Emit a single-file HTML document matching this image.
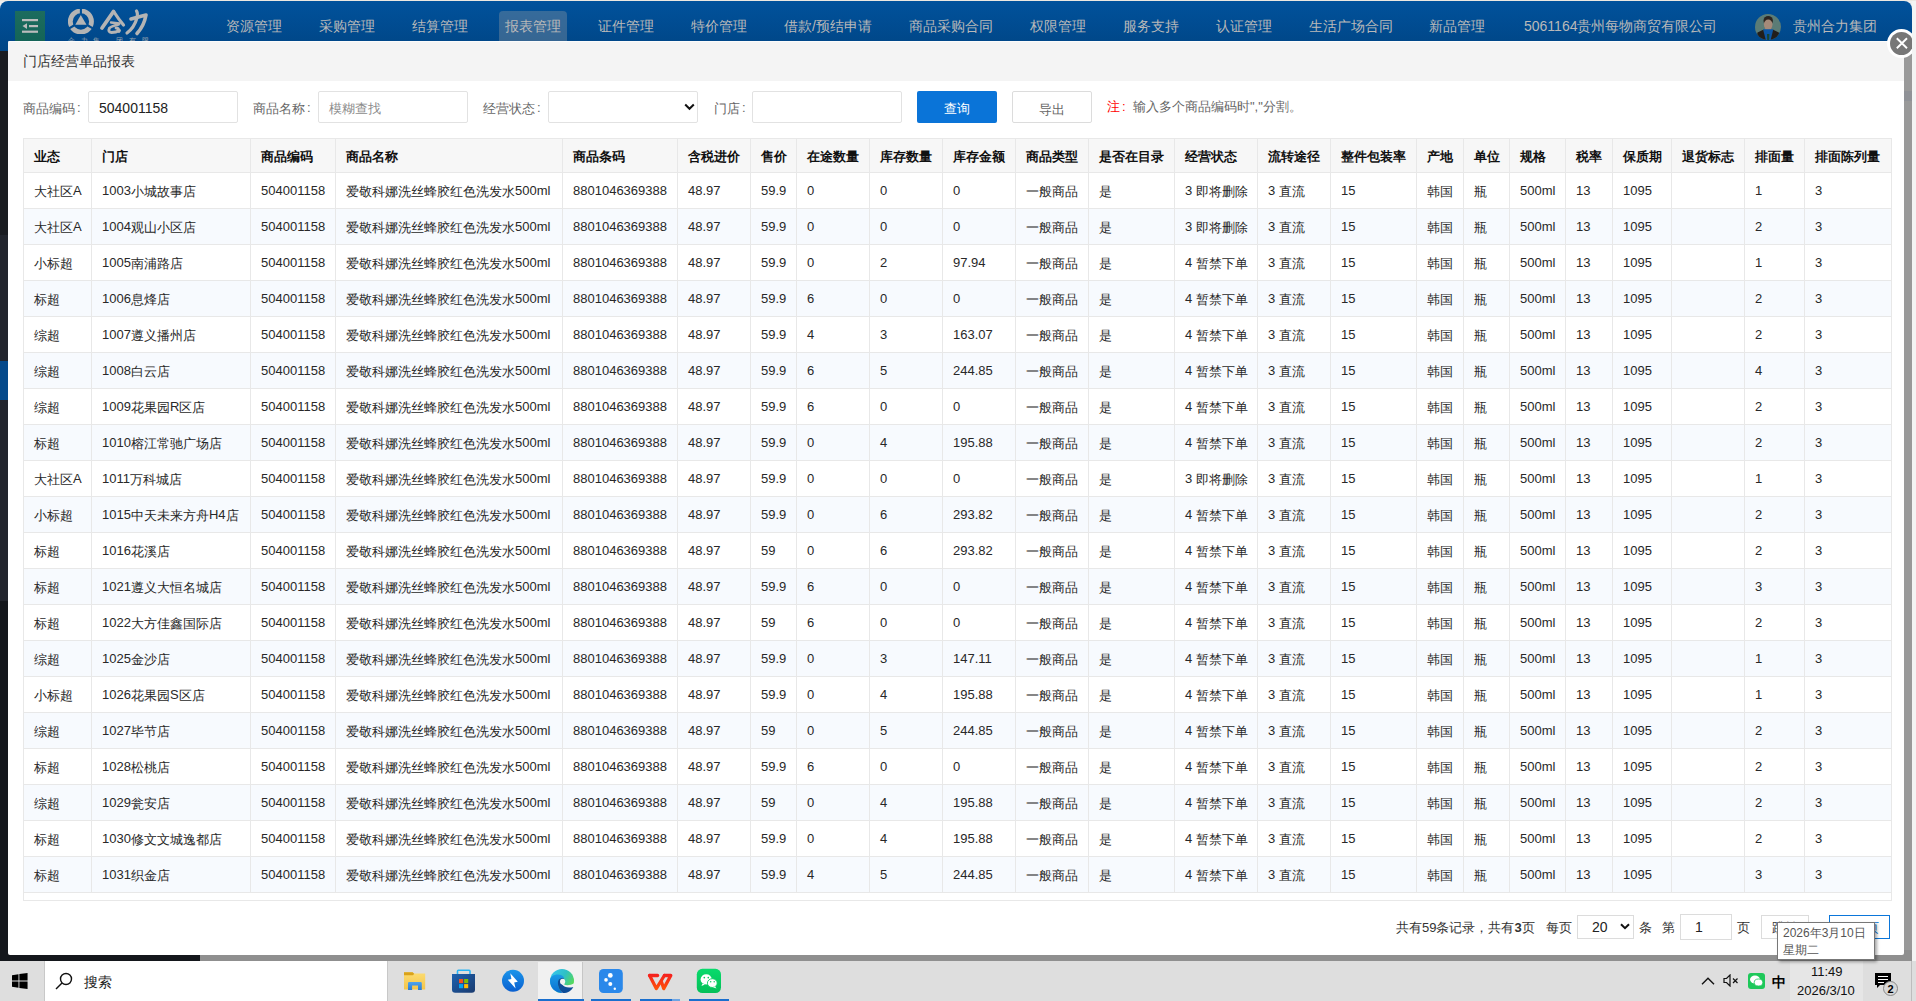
<!DOCTYPE html><html><head><meta charset="utf-8"><title>门店经营单品报表</title><style>
*{box-sizing:border-box}
html,body{margin:0;padding:0}
body{width:1916px;height:1001px;overflow:hidden;position:relative;background:#f0f0f0;font-family:"Liberation Sans",sans-serif;color:#333}
i{font-style:normal;position:relative}
.a{position:absolute}
.t{position:absolute;white-space:nowrap}
#win{position:absolute;left:0;top:0;width:1912px;height:961px;overflow:hidden}
#hdr{left:0;top:1px;width:1912px;height:50px;background:linear-gradient(#01529c,#004585);border-radius:8px 8px 0 0}
.nav{position:absolute;top:17px;font-size:14px;line-height:18px;color:#b9b9b9;white-space:nowrap}
#content{left:200px;top:51px;width:1712px;height:910px;background:#999}
#modal{left:8px;top:41px;width:1896px;height:914px;background:#fff;border-radius:2px;overflow:hidden}
#mtitle{left:0;top:0;width:1896px;height:40px;background:#f4f4f4;border-top:1px solid #fbfbfb}
.lbl{position:absolute;font-size:13px;line-height:16px;color:#666;white-space:nowrap}
.inp{position:absolute;height:32px;width:150px;border:1px solid #e2e2e2;border-radius:2px;background:#fff}
.cell{position:absolute;font-size:13px;line-height:16px;color:#282828;white-space:nowrap}
.hcell{position:absolute;font-size:13px;line-height:16px;color:#111;font-weight:bold;white-space:nowrap}
.vl{position:absolute;width:1px;background:#e8e8e8}
.hl{position:absolute;height:1px;background:#e8e8e8}
</style></head><body>
<div class="a" style="left:0;top:0;width:1916px;height:1px;background:#ece8e1"></div>
<div id="win">
<div class="a" id="content"></div>
<div class="a" style="left:200px;top:950px;width:1712px;height:11px;background:#8f8f8f"></div>
<div class="a" style="left:0;top:51px;width:200px;height:910px;background:#14171c"></div>
<div class="a" style="left:0;top:51px;width:200px;height:184px;background:#1a1c21"></div>
<div class="a" style="left:0;top:235px;width:200px;height:366px;background:#22252d"></div>
<div class="a" style="left:0;top:361px;width:200px;height:39px;background:#05498a"></div>
<div class="a" id="hdr"></div>
<div class="a" style="left:15px;top:11px;width:30px;height:31px;background:linear-gradient(#1c6c5e,#146457)"></div>
<svg class="a" style="left:15px;top:11px" width="30" height="30" viewBox="0 0 30 30"><g fill="#bcbcbc"><rect x="7" y="8" width="16" height="2.2"/><rect x="14" y="14" width="9" height="2.2"/><rect x="7" y="19.6" width="16" height="2.2"/><path d="M7.5 15.1 L12 12.2 L12 18 Z"/></g></svg>
<svg class="a" style="left:64px;top:4px" width="88" height="40" viewBox="0 0 88 40">
<defs><mask id="rm"><rect width="40" height="40" fill="#fff"/>
<g stroke="#000" stroke-width="2.1"><path d="M16.9 17.5 L16.9 0"/><path d="M16.9 17.5 L40 30.8"/><path d="M16.9 17.5 L-6.2 30.8"/></g></mask></defs>
<circle cx="16.9" cy="17.5" r="10.6" fill="none" stroke="#b4b4b4" stroke-width="4.8" mask="url(#rm)"/>
<path d="M16.8 11 L22.5 20.7 L11.25 20.7 Z" fill="#b4b4b4"/>
<g fill="none" stroke="#b4b4b4" stroke-linecap="round" stroke-linejoin="round">
<path d="M49.5 7.5 Q44 15.5 38 24" stroke-width="3.8"/>
<path d="M50 8 Q54.5 15 59.5 21" stroke-width="3.2"/>
<path d="M47 18.5 L55.5 19.5" stroke-width="2.4"/>
<path d="M54.5 20.5 Q48 22 45.5 24 Q43.5 28 47.5 28.5 Q52 28.5 55.5 26.5" stroke-width="2.8"/>
<path d="M52 24 Q55 24 55 27.5" stroke-width="2.8"/>
<path d="M67 15 Q74 13 82 11 Q80 22 73 29.5" stroke-width="3.6"/>
<path d="M72.5 7 Q74 9 73 14 Q70 24 63 29" stroke-width="3.2"/>
</g>
</svg>
<div class="t" style="left:68px;top:37px;font-size:7px;line-height:8px;color:#9aa4b0">合</div>
<div class="t" style="left:81px;top:37px;font-size:7px;line-height:8px;color:#9aa4b0">力</div>
<div class="t" style="left:93px;top:37px;font-size:7px;line-height:8px;color:#9aa4b0">集</div>
<div class="t" style="left:116px;top:37px;font-size:7px;line-height:8px;color:#9aa4b0">团</div>
<div class="t" style="left:129px;top:37px;font-size:7px;line-height:8px;color:#9aa4b0">有</div>
<div class="t" style="left:142px;top:37px;font-size:7px;line-height:8px;color:#9aa4b0">限</div>
<div class="a" style="left:499px;top:11px;width:68px;height:30px;background:rgba(165,165,165,0.33);border-radius:4px 4px 0 0"></div>
<div class="nav" style="left:226px">资源管理</div>
<div class="nav" style="left:319px">采购管理</div>
<div class="nav" style="left:412px">结算管理</div>
<div class="nav" style="left:505px">报表管理</div>
<div class="nav" style="left:598px">证件管理</div>
<div class="nav" style="left:691px">特价管理</div>
<div class="nav" style="left:784px">借款/预结申请</div>
<div class="nav" style="left:909px">商品采购合同</div>
<div class="nav" style="left:1030px">权限管理</div>
<div class="nav" style="left:1123px">服务支持</div>
<div class="nav" style="left:1216px">认证管理</div>
<div class="nav" style="left:1309px">生活广场合同</div>
<div class="nav" style="left:1429px">新品管理</div>
<div class="nav" style="left:1524px">5061164贵州每物商贸有限公司</div>
<div class="nav" style="left:1793px">贵州合力集团</div>
<svg class="a" style="left:1755px;top:14px" width="26" height="27" viewBox="0 0 26 27">
<defs><clipPath id="cc"><circle cx="13" cy="13" r="13"/></clipPath></defs>
<g clip-path="url(#cc)"><rect width="26" height="27" fill="#5b7c76"/>
<ellipse cx="13.2" cy="6.8" rx="4.7" ry="4.9" fill="#2b241f"/>
<rect x="10.1" y="12" width="6.1" height="4.5" fill="#9a7f6f"/>
<ellipse cx="13.2" cy="10.6" rx="4.3" ry="5" fill="#a58a79"/>
<path d="M8 15.2 L18.4 15.2 L16.8 27 L9.8 27 Z" fill="#0b56a6"/>
<path d="M2.5 18.5 L8.2 15.8 L11 27 L1 27 Z" fill="#221e1b"/>
<path d="M23.8 18.5 L18.2 15.8 L15.4 27 L25 27 Z" fill="#221e1b"/>
<path d="M12 19.9 L14.4 19.9 L14.2 26 L12.2 26 Z" fill="#174536"/>
</g></svg>
<div class="a" id="modal">
<div class="a" id="mtitle"></div>
<div class="t" style="left:15px;top:11px;font-size:14px;line-height:18px;color:#333">门店经营单品报表</div>
</div>
<div class="lbl" style="left:23px;top:100px"><i style="top:1px">商品编码</i><span style="margin-left:2px">:</span></div>
<div class="inp" style="left:88px;top:91px"></div>
<div class="t" style="left:99px;top:100px;font-size:14px;line-height:16px;color:#222">504001158</div>
<div class="lbl" style="left:253px;top:100px"><i style="top:1px">商品名称</i><span style="margin-left:2px">:</span></div>
<div class="inp" style="left:318px;top:91px"></div>
<div class="t" style="left:329px;top:101px;font-size:13px;line-height:16px;color:#8c8c8c">模糊查找</div>
<div class="lbl" style="left:483px;top:100px"><i style="top:1px">经营状态</i><span style="margin-left:2px">:</span></div>
<div class="inp" style="left:548px;top:91px"></div>
<svg class="a" style="left:684px;top:103px" width="11" height="8" viewBox="0 0 11 8"><path d="M1.2 1.5 L5.5 5.8 L9.8 1.5" fill="none" stroke="#111" stroke-width="2"/></svg>
<div class="lbl" style="left:714px;top:100px"><i style="top:1px">门店</i><span style="margin-left:2px">:</span></div>
<div class="inp" style="left:752px;top:91px"></div>
<div class="a" style="left:917px;top:91px;width:80px;height:32px;background:#0a74d8;border-radius:2px"></div>
<div class="t" style="left:944px;top:101px;font-size:13px;line-height:16px;color:#fff">查询</div>
<div class="a" style="left:1012px;top:91px;width:80px;height:32px;background:#fff;border:1px solid #dcdcdc;border-radius:2px"></div>
<div class="t" style="left:1039px;top:102px;font-size:13px;line-height:16px;color:#666">导出</div>
<div class="t" style="left:1107px;top:99px;font-size:13px;line-height:16px;color:#f00">注<span style="margin-left:2px">:</span></div>
<div class="t" style="left:1133px;top:99px;font-size:13px;line-height:16px;color:#666">输入多个商品编码时","分割。</div>
<div class="a" style="left:23px;top:138px;width:1869px;height:763px;border:1px solid #e8e8e8;background:#fff"></div>
<div class="a" style="left:24px;top:139px;width:1867px;height:33px;background:#f7f7f7"></div>
<div class="a" style="left:24px;top:209px;width:1867px;height:35px;background:#f7fafe"></div>
<div class="a" style="left:24px;top:281px;width:1867px;height:35px;background:#f7fafe"></div>
<div class="a" style="left:24px;top:353px;width:1867px;height:35px;background:#f7fafe"></div>
<div class="a" style="left:24px;top:425px;width:1867px;height:35px;background:#f7fafe"></div>
<div class="a" style="left:24px;top:497px;width:1867px;height:35px;background:#f7fafe"></div>
<div class="a" style="left:24px;top:569px;width:1867px;height:35px;background:#f7fafe"></div>
<div class="a" style="left:24px;top:641px;width:1867px;height:35px;background:#f7fafe"></div>
<div class="a" style="left:24px;top:713px;width:1867px;height:35px;background:#f7fafe"></div>
<div class="a" style="left:24px;top:785px;width:1867px;height:35px;background:#f7fafe"></div>
<div class="a" style="left:24px;top:857px;width:1867px;height:35px;background:#f7fafe"></div>
<div class="hl" style="left:23px;top:172px;width:1869px"></div>
<div class="hl" style="left:23px;top:208px;width:1869px"></div>
<div class="hl" style="left:23px;top:244px;width:1869px"></div>
<div class="hl" style="left:23px;top:280px;width:1869px"></div>
<div class="hl" style="left:23px;top:316px;width:1869px"></div>
<div class="hl" style="left:23px;top:352px;width:1869px"></div>
<div class="hl" style="left:23px;top:388px;width:1869px"></div>
<div class="hl" style="left:23px;top:424px;width:1869px"></div>
<div class="hl" style="left:23px;top:460px;width:1869px"></div>
<div class="hl" style="left:23px;top:496px;width:1869px"></div>
<div class="hl" style="left:23px;top:532px;width:1869px"></div>
<div class="hl" style="left:23px;top:568px;width:1869px"></div>
<div class="hl" style="left:23px;top:604px;width:1869px"></div>
<div class="hl" style="left:23px;top:640px;width:1869px"></div>
<div class="hl" style="left:23px;top:676px;width:1869px"></div>
<div class="hl" style="left:23px;top:712px;width:1869px"></div>
<div class="hl" style="left:23px;top:748px;width:1869px"></div>
<div class="hl" style="left:23px;top:784px;width:1869px"></div>
<div class="hl" style="left:23px;top:820px;width:1869px"></div>
<div class="hl" style="left:23px;top:856px;width:1869px"></div>
<div class="hl" style="left:23px;top:892px;width:1869px"></div>
<div class="vl" style="left:91px;top:138px;height:754px"></div>
<div class="vl" style="left:250px;top:138px;height:754px"></div>
<div class="vl" style="left:335px;top:138px;height:754px"></div>
<div class="vl" style="left:562px;top:138px;height:754px"></div>
<div class="vl" style="left:677px;top:138px;height:754px"></div>
<div class="vl" style="left:750px;top:138px;height:754px"></div>
<div class="vl" style="left:796px;top:138px;height:754px"></div>
<div class="vl" style="left:869px;top:138px;height:754px"></div>
<div class="vl" style="left:942px;top:138px;height:754px"></div>
<div class="vl" style="left:1015px;top:138px;height:754px"></div>
<div class="vl" style="left:1088px;top:138px;height:754px"></div>
<div class="vl" style="left:1174px;top:138px;height:754px"></div>
<div class="vl" style="left:1257px;top:138px;height:754px"></div>
<div class="vl" style="left:1330px;top:138px;height:754px"></div>
<div class="vl" style="left:1416px;top:138px;height:754px"></div>
<div class="vl" style="left:1463px;top:138px;height:754px"></div>
<div class="vl" style="left:1509px;top:138px;height:754px"></div>
<div class="vl" style="left:1565px;top:138px;height:754px"></div>
<div class="vl" style="left:1612px;top:138px;height:754px"></div>
<div class="vl" style="left:1671px;top:138px;height:754px"></div>
<div class="vl" style="left:1744px;top:138px;height:754px"></div>
<div class="vl" style="left:1804px;top:138px;height:754px"></div>
<div class="hcell" style="left:34px;top:149px">业态</div>
<div class="hcell" style="left:102px;top:149px">门店</div>
<div class="hcell" style="left:261px;top:149px">商品编码</div>
<div class="hcell" style="left:346px;top:149px">商品名称</div>
<div class="hcell" style="left:573px;top:149px">商品条码</div>
<div class="hcell" style="left:688px;top:149px">含税进价</div>
<div class="hcell" style="left:761px;top:149px">售价</div>
<div class="hcell" style="left:807px;top:149px">在途数量</div>
<div class="hcell" style="left:880px;top:149px">库存数量</div>
<div class="hcell" style="left:953px;top:149px">库存金额</div>
<div class="hcell" style="left:1026px;top:149px">商品类型</div>
<div class="hcell" style="left:1099px;top:149px">是否在目录</div>
<div class="hcell" style="left:1185px;top:149px">经营状态</div>
<div class="hcell" style="left:1268px;top:149px">流转途径</div>
<div class="hcell" style="left:1341px;top:149px">整件包装率</div>
<div class="hcell" style="left:1427px;top:149px">产地</div>
<div class="hcell" style="left:1474px;top:149px">单位</div>
<div class="hcell" style="left:1520px;top:149px">规格</div>
<div class="hcell" style="left:1576px;top:149px">税率</div>
<div class="hcell" style="left:1623px;top:149px">保质期</div>
<div class="hcell" style="left:1682px;top:149px">退货标志</div>
<div class="hcell" style="left:1755px;top:149px">排面量</div>
<div class="hcell" style="left:1815px;top:149px">排面陈列量</div>
<div class="cell" style="left:34px;top:183px"><i style="top:1px">大社区</i>A</div>
<div class="cell" style="left:102px;top:183px">1003<i style="top:1px">小城故事店</i></div>
<div class="cell" style="left:261px;top:183px">504001158</div>
<div class="cell" style="left:346px;top:183px"><i style="top:1px">爱敬科娜洗丝蜂胶红色洗发水</i>500ml</div>
<div class="cell" style="left:573px;top:183px">8801046369388</div>
<div class="cell" style="left:688px;top:183px">48.97</div>
<div class="cell" style="left:761px;top:183px">59.9</div>
<div class="cell" style="left:807px;top:183px">0</div>
<div class="cell" style="left:880px;top:183px">0</div>
<div class="cell" style="left:953px;top:183px">0</div>
<div class="cell" style="left:1026px;top:183px"><i style="top:1px">一般商品</i></div>
<div class="cell" style="left:1099px;top:183px"><i style="top:1px">是</i></div>
<div class="cell" style="left:1185px;top:183px">3 <i style="top:1px">即将删除</i></div>
<div class="cell" style="left:1268px;top:183px">3 <i style="top:1px">直流</i></div>
<div class="cell" style="left:1341px;top:183px">15</div>
<div class="cell" style="left:1427px;top:183px"><i style="top:1px">韩国</i></div>
<div class="cell" style="left:1474px;top:183px"><i style="top:1px">瓶</i></div>
<div class="cell" style="left:1520px;top:183px">500ml</div>
<div class="cell" style="left:1576px;top:183px">13</div>
<div class="cell" style="left:1623px;top:183px">1095</div>
<div class="cell" style="left:1755px;top:183px">1</div>
<div class="cell" style="left:1815px;top:183px">3</div>
<div class="cell" style="left:34px;top:219px"><i style="top:1px">大社区</i>A</div>
<div class="cell" style="left:102px;top:219px">1004<i style="top:1px">观山小区店</i></div>
<div class="cell" style="left:261px;top:219px">504001158</div>
<div class="cell" style="left:346px;top:219px"><i style="top:1px">爱敬科娜洗丝蜂胶红色洗发水</i>500ml</div>
<div class="cell" style="left:573px;top:219px">8801046369388</div>
<div class="cell" style="left:688px;top:219px">48.97</div>
<div class="cell" style="left:761px;top:219px">59.9</div>
<div class="cell" style="left:807px;top:219px">0</div>
<div class="cell" style="left:880px;top:219px">0</div>
<div class="cell" style="left:953px;top:219px">0</div>
<div class="cell" style="left:1026px;top:219px"><i style="top:1px">一般商品</i></div>
<div class="cell" style="left:1099px;top:219px"><i style="top:1px">是</i></div>
<div class="cell" style="left:1185px;top:219px">3 <i style="top:1px">即将删除</i></div>
<div class="cell" style="left:1268px;top:219px">3 <i style="top:1px">直流</i></div>
<div class="cell" style="left:1341px;top:219px">15</div>
<div class="cell" style="left:1427px;top:219px"><i style="top:1px">韩国</i></div>
<div class="cell" style="left:1474px;top:219px"><i style="top:1px">瓶</i></div>
<div class="cell" style="left:1520px;top:219px">500ml</div>
<div class="cell" style="left:1576px;top:219px">13</div>
<div class="cell" style="left:1623px;top:219px">1095</div>
<div class="cell" style="left:1755px;top:219px">2</div>
<div class="cell" style="left:1815px;top:219px">3</div>
<div class="cell" style="left:34px;top:255px"><i style="top:1px">小标超</i></div>
<div class="cell" style="left:102px;top:255px">1005<i style="top:1px">南浦路店</i></div>
<div class="cell" style="left:261px;top:255px">504001158</div>
<div class="cell" style="left:346px;top:255px"><i style="top:1px">爱敬科娜洗丝蜂胶红色洗发水</i>500ml</div>
<div class="cell" style="left:573px;top:255px">8801046369388</div>
<div class="cell" style="left:688px;top:255px">48.97</div>
<div class="cell" style="left:761px;top:255px">59.9</div>
<div class="cell" style="left:807px;top:255px">0</div>
<div class="cell" style="left:880px;top:255px">2</div>
<div class="cell" style="left:953px;top:255px">97.94</div>
<div class="cell" style="left:1026px;top:255px"><i style="top:1px">一般商品</i></div>
<div class="cell" style="left:1099px;top:255px"><i style="top:1px">是</i></div>
<div class="cell" style="left:1185px;top:255px">4 <i style="top:1px">暂禁下单</i></div>
<div class="cell" style="left:1268px;top:255px">3 <i style="top:1px">直流</i></div>
<div class="cell" style="left:1341px;top:255px">15</div>
<div class="cell" style="left:1427px;top:255px"><i style="top:1px">韩国</i></div>
<div class="cell" style="left:1474px;top:255px"><i style="top:1px">瓶</i></div>
<div class="cell" style="left:1520px;top:255px">500ml</div>
<div class="cell" style="left:1576px;top:255px">13</div>
<div class="cell" style="left:1623px;top:255px">1095</div>
<div class="cell" style="left:1755px;top:255px">1</div>
<div class="cell" style="left:1815px;top:255px">3</div>
<div class="cell" style="left:34px;top:291px"><i style="top:1px">标超</i></div>
<div class="cell" style="left:102px;top:291px">1006<i style="top:1px">息烽店</i></div>
<div class="cell" style="left:261px;top:291px">504001158</div>
<div class="cell" style="left:346px;top:291px"><i style="top:1px">爱敬科娜洗丝蜂胶红色洗发水</i>500ml</div>
<div class="cell" style="left:573px;top:291px">8801046369388</div>
<div class="cell" style="left:688px;top:291px">48.97</div>
<div class="cell" style="left:761px;top:291px">59.9</div>
<div class="cell" style="left:807px;top:291px">6</div>
<div class="cell" style="left:880px;top:291px">0</div>
<div class="cell" style="left:953px;top:291px">0</div>
<div class="cell" style="left:1026px;top:291px"><i style="top:1px">一般商品</i></div>
<div class="cell" style="left:1099px;top:291px"><i style="top:1px">是</i></div>
<div class="cell" style="left:1185px;top:291px">4 <i style="top:1px">暂禁下单</i></div>
<div class="cell" style="left:1268px;top:291px">3 <i style="top:1px">直流</i></div>
<div class="cell" style="left:1341px;top:291px">15</div>
<div class="cell" style="left:1427px;top:291px"><i style="top:1px">韩国</i></div>
<div class="cell" style="left:1474px;top:291px"><i style="top:1px">瓶</i></div>
<div class="cell" style="left:1520px;top:291px">500ml</div>
<div class="cell" style="left:1576px;top:291px">13</div>
<div class="cell" style="left:1623px;top:291px">1095</div>
<div class="cell" style="left:1755px;top:291px">2</div>
<div class="cell" style="left:1815px;top:291px">3</div>
<div class="cell" style="left:34px;top:327px"><i style="top:1px">综超</i></div>
<div class="cell" style="left:102px;top:327px">1007<i style="top:1px">遵义播州店</i></div>
<div class="cell" style="left:261px;top:327px">504001158</div>
<div class="cell" style="left:346px;top:327px"><i style="top:1px">爱敬科娜洗丝蜂胶红色洗发水</i>500ml</div>
<div class="cell" style="left:573px;top:327px">8801046369388</div>
<div class="cell" style="left:688px;top:327px">48.97</div>
<div class="cell" style="left:761px;top:327px">59.9</div>
<div class="cell" style="left:807px;top:327px">4</div>
<div class="cell" style="left:880px;top:327px">3</div>
<div class="cell" style="left:953px;top:327px">163.07</div>
<div class="cell" style="left:1026px;top:327px"><i style="top:1px">一般商品</i></div>
<div class="cell" style="left:1099px;top:327px"><i style="top:1px">是</i></div>
<div class="cell" style="left:1185px;top:327px">4 <i style="top:1px">暂禁下单</i></div>
<div class="cell" style="left:1268px;top:327px">3 <i style="top:1px">直流</i></div>
<div class="cell" style="left:1341px;top:327px">15</div>
<div class="cell" style="left:1427px;top:327px"><i style="top:1px">韩国</i></div>
<div class="cell" style="left:1474px;top:327px"><i style="top:1px">瓶</i></div>
<div class="cell" style="left:1520px;top:327px">500ml</div>
<div class="cell" style="left:1576px;top:327px">13</div>
<div class="cell" style="left:1623px;top:327px">1095</div>
<div class="cell" style="left:1755px;top:327px">2</div>
<div class="cell" style="left:1815px;top:327px">3</div>
<div class="cell" style="left:34px;top:363px"><i style="top:1px">综超</i></div>
<div class="cell" style="left:102px;top:363px">1008<i style="top:1px">白云店</i></div>
<div class="cell" style="left:261px;top:363px">504001158</div>
<div class="cell" style="left:346px;top:363px"><i style="top:1px">爱敬科娜洗丝蜂胶红色洗发水</i>500ml</div>
<div class="cell" style="left:573px;top:363px">8801046369388</div>
<div class="cell" style="left:688px;top:363px">48.97</div>
<div class="cell" style="left:761px;top:363px">59.9</div>
<div class="cell" style="left:807px;top:363px">6</div>
<div class="cell" style="left:880px;top:363px">5</div>
<div class="cell" style="left:953px;top:363px">244.85</div>
<div class="cell" style="left:1026px;top:363px"><i style="top:1px">一般商品</i></div>
<div class="cell" style="left:1099px;top:363px"><i style="top:1px">是</i></div>
<div class="cell" style="left:1185px;top:363px">4 <i style="top:1px">暂禁下单</i></div>
<div class="cell" style="left:1268px;top:363px">3 <i style="top:1px">直流</i></div>
<div class="cell" style="left:1341px;top:363px">15</div>
<div class="cell" style="left:1427px;top:363px"><i style="top:1px">韩国</i></div>
<div class="cell" style="left:1474px;top:363px"><i style="top:1px">瓶</i></div>
<div class="cell" style="left:1520px;top:363px">500ml</div>
<div class="cell" style="left:1576px;top:363px">13</div>
<div class="cell" style="left:1623px;top:363px">1095</div>
<div class="cell" style="left:1755px;top:363px">4</div>
<div class="cell" style="left:1815px;top:363px">3</div>
<div class="cell" style="left:34px;top:399px"><i style="top:1px">综超</i></div>
<div class="cell" style="left:102px;top:399px">1009<i style="top:1px">花果园</i>R<i style="top:1px">区店</i></div>
<div class="cell" style="left:261px;top:399px">504001158</div>
<div class="cell" style="left:346px;top:399px"><i style="top:1px">爱敬科娜洗丝蜂胶红色洗发水</i>500ml</div>
<div class="cell" style="left:573px;top:399px">8801046369388</div>
<div class="cell" style="left:688px;top:399px">48.97</div>
<div class="cell" style="left:761px;top:399px">59.9</div>
<div class="cell" style="left:807px;top:399px">6</div>
<div class="cell" style="left:880px;top:399px">0</div>
<div class="cell" style="left:953px;top:399px">0</div>
<div class="cell" style="left:1026px;top:399px"><i style="top:1px">一般商品</i></div>
<div class="cell" style="left:1099px;top:399px"><i style="top:1px">是</i></div>
<div class="cell" style="left:1185px;top:399px">4 <i style="top:1px">暂禁下单</i></div>
<div class="cell" style="left:1268px;top:399px">3 <i style="top:1px">直流</i></div>
<div class="cell" style="left:1341px;top:399px">15</div>
<div class="cell" style="left:1427px;top:399px"><i style="top:1px">韩国</i></div>
<div class="cell" style="left:1474px;top:399px"><i style="top:1px">瓶</i></div>
<div class="cell" style="left:1520px;top:399px">500ml</div>
<div class="cell" style="left:1576px;top:399px">13</div>
<div class="cell" style="left:1623px;top:399px">1095</div>
<div class="cell" style="left:1755px;top:399px">2</div>
<div class="cell" style="left:1815px;top:399px">3</div>
<div class="cell" style="left:34px;top:435px"><i style="top:1px">标超</i></div>
<div class="cell" style="left:102px;top:435px">1010<i style="top:1px">榕江常驰广场店</i></div>
<div class="cell" style="left:261px;top:435px">504001158</div>
<div class="cell" style="left:346px;top:435px"><i style="top:1px">爱敬科娜洗丝蜂胶红色洗发水</i>500ml</div>
<div class="cell" style="left:573px;top:435px">8801046369388</div>
<div class="cell" style="left:688px;top:435px">48.97</div>
<div class="cell" style="left:761px;top:435px">59.9</div>
<div class="cell" style="left:807px;top:435px">0</div>
<div class="cell" style="left:880px;top:435px">4</div>
<div class="cell" style="left:953px;top:435px">195.88</div>
<div class="cell" style="left:1026px;top:435px"><i style="top:1px">一般商品</i></div>
<div class="cell" style="left:1099px;top:435px"><i style="top:1px">是</i></div>
<div class="cell" style="left:1185px;top:435px">4 <i style="top:1px">暂禁下单</i></div>
<div class="cell" style="left:1268px;top:435px">3 <i style="top:1px">直流</i></div>
<div class="cell" style="left:1341px;top:435px">15</div>
<div class="cell" style="left:1427px;top:435px"><i style="top:1px">韩国</i></div>
<div class="cell" style="left:1474px;top:435px"><i style="top:1px">瓶</i></div>
<div class="cell" style="left:1520px;top:435px">500ml</div>
<div class="cell" style="left:1576px;top:435px">13</div>
<div class="cell" style="left:1623px;top:435px">1095</div>
<div class="cell" style="left:1755px;top:435px">2</div>
<div class="cell" style="left:1815px;top:435px">3</div>
<div class="cell" style="left:34px;top:471px"><i style="top:1px">大社区</i>A</div>
<div class="cell" style="left:102px;top:471px">1011<i style="top:1px">万科城店</i></div>
<div class="cell" style="left:261px;top:471px">504001158</div>
<div class="cell" style="left:346px;top:471px"><i style="top:1px">爱敬科娜洗丝蜂胶红色洗发水</i>500ml</div>
<div class="cell" style="left:573px;top:471px">8801046369388</div>
<div class="cell" style="left:688px;top:471px">48.97</div>
<div class="cell" style="left:761px;top:471px">59.9</div>
<div class="cell" style="left:807px;top:471px">0</div>
<div class="cell" style="left:880px;top:471px">0</div>
<div class="cell" style="left:953px;top:471px">0</div>
<div class="cell" style="left:1026px;top:471px"><i style="top:1px">一般商品</i></div>
<div class="cell" style="left:1099px;top:471px"><i style="top:1px">是</i></div>
<div class="cell" style="left:1185px;top:471px">3 <i style="top:1px">即将删除</i></div>
<div class="cell" style="left:1268px;top:471px">3 <i style="top:1px">直流</i></div>
<div class="cell" style="left:1341px;top:471px">15</div>
<div class="cell" style="left:1427px;top:471px"><i style="top:1px">韩国</i></div>
<div class="cell" style="left:1474px;top:471px"><i style="top:1px">瓶</i></div>
<div class="cell" style="left:1520px;top:471px">500ml</div>
<div class="cell" style="left:1576px;top:471px">13</div>
<div class="cell" style="left:1623px;top:471px">1095</div>
<div class="cell" style="left:1755px;top:471px">1</div>
<div class="cell" style="left:1815px;top:471px">3</div>
<div class="cell" style="left:34px;top:507px"><i style="top:1px">小标超</i></div>
<div class="cell" style="left:102px;top:507px">1015<i style="top:1px">中天未来方舟</i>H4<i style="top:1px">店</i></div>
<div class="cell" style="left:261px;top:507px">504001158</div>
<div class="cell" style="left:346px;top:507px"><i style="top:1px">爱敬科娜洗丝蜂胶红色洗发水</i>500ml</div>
<div class="cell" style="left:573px;top:507px">8801046369388</div>
<div class="cell" style="left:688px;top:507px">48.97</div>
<div class="cell" style="left:761px;top:507px">59.9</div>
<div class="cell" style="left:807px;top:507px">0</div>
<div class="cell" style="left:880px;top:507px">6</div>
<div class="cell" style="left:953px;top:507px">293.82</div>
<div class="cell" style="left:1026px;top:507px"><i style="top:1px">一般商品</i></div>
<div class="cell" style="left:1099px;top:507px"><i style="top:1px">是</i></div>
<div class="cell" style="left:1185px;top:507px">4 <i style="top:1px">暂禁下单</i></div>
<div class="cell" style="left:1268px;top:507px">3 <i style="top:1px">直流</i></div>
<div class="cell" style="left:1341px;top:507px">15</div>
<div class="cell" style="left:1427px;top:507px"><i style="top:1px">韩国</i></div>
<div class="cell" style="left:1474px;top:507px"><i style="top:1px">瓶</i></div>
<div class="cell" style="left:1520px;top:507px">500ml</div>
<div class="cell" style="left:1576px;top:507px">13</div>
<div class="cell" style="left:1623px;top:507px">1095</div>
<div class="cell" style="left:1755px;top:507px">2</div>
<div class="cell" style="left:1815px;top:507px">3</div>
<div class="cell" style="left:34px;top:543px"><i style="top:1px">标超</i></div>
<div class="cell" style="left:102px;top:543px">1016<i style="top:1px">花溪店</i></div>
<div class="cell" style="left:261px;top:543px">504001158</div>
<div class="cell" style="left:346px;top:543px"><i style="top:1px">爱敬科娜洗丝蜂胶红色洗发水</i>500ml</div>
<div class="cell" style="left:573px;top:543px">8801046369388</div>
<div class="cell" style="left:688px;top:543px">48.97</div>
<div class="cell" style="left:761px;top:543px">59</div>
<div class="cell" style="left:807px;top:543px">0</div>
<div class="cell" style="left:880px;top:543px">6</div>
<div class="cell" style="left:953px;top:543px">293.82</div>
<div class="cell" style="left:1026px;top:543px"><i style="top:1px">一般商品</i></div>
<div class="cell" style="left:1099px;top:543px"><i style="top:1px">是</i></div>
<div class="cell" style="left:1185px;top:543px">4 <i style="top:1px">暂禁下单</i></div>
<div class="cell" style="left:1268px;top:543px">3 <i style="top:1px">直流</i></div>
<div class="cell" style="left:1341px;top:543px">15</div>
<div class="cell" style="left:1427px;top:543px"><i style="top:1px">韩国</i></div>
<div class="cell" style="left:1474px;top:543px"><i style="top:1px">瓶</i></div>
<div class="cell" style="left:1520px;top:543px">500ml</div>
<div class="cell" style="left:1576px;top:543px">13</div>
<div class="cell" style="left:1623px;top:543px">1095</div>
<div class="cell" style="left:1755px;top:543px">2</div>
<div class="cell" style="left:1815px;top:543px">3</div>
<div class="cell" style="left:34px;top:579px"><i style="top:1px">标超</i></div>
<div class="cell" style="left:102px;top:579px">1021<i style="top:1px">遵义大恒名城店</i></div>
<div class="cell" style="left:261px;top:579px">504001158</div>
<div class="cell" style="left:346px;top:579px"><i style="top:1px">爱敬科娜洗丝蜂胶红色洗发水</i>500ml</div>
<div class="cell" style="left:573px;top:579px">8801046369388</div>
<div class="cell" style="left:688px;top:579px">48.97</div>
<div class="cell" style="left:761px;top:579px">59.9</div>
<div class="cell" style="left:807px;top:579px">6</div>
<div class="cell" style="left:880px;top:579px">0</div>
<div class="cell" style="left:953px;top:579px">0</div>
<div class="cell" style="left:1026px;top:579px"><i style="top:1px">一般商品</i></div>
<div class="cell" style="left:1099px;top:579px"><i style="top:1px">是</i></div>
<div class="cell" style="left:1185px;top:579px">4 <i style="top:1px">暂禁下单</i></div>
<div class="cell" style="left:1268px;top:579px">3 <i style="top:1px">直流</i></div>
<div class="cell" style="left:1341px;top:579px">15</div>
<div class="cell" style="left:1427px;top:579px"><i style="top:1px">韩国</i></div>
<div class="cell" style="left:1474px;top:579px"><i style="top:1px">瓶</i></div>
<div class="cell" style="left:1520px;top:579px">500ml</div>
<div class="cell" style="left:1576px;top:579px">13</div>
<div class="cell" style="left:1623px;top:579px">1095</div>
<div class="cell" style="left:1755px;top:579px">3</div>
<div class="cell" style="left:1815px;top:579px">3</div>
<div class="cell" style="left:34px;top:615px"><i style="top:1px">标超</i></div>
<div class="cell" style="left:102px;top:615px">1022<i style="top:1px">大方佳鑫国际店</i></div>
<div class="cell" style="left:261px;top:615px">504001158</div>
<div class="cell" style="left:346px;top:615px"><i style="top:1px">爱敬科娜洗丝蜂胶红色洗发水</i>500ml</div>
<div class="cell" style="left:573px;top:615px">8801046369388</div>
<div class="cell" style="left:688px;top:615px">48.97</div>
<div class="cell" style="left:761px;top:615px">59</div>
<div class="cell" style="left:807px;top:615px">6</div>
<div class="cell" style="left:880px;top:615px">0</div>
<div class="cell" style="left:953px;top:615px">0</div>
<div class="cell" style="left:1026px;top:615px"><i style="top:1px">一般商品</i></div>
<div class="cell" style="left:1099px;top:615px"><i style="top:1px">是</i></div>
<div class="cell" style="left:1185px;top:615px">4 <i style="top:1px">暂禁下单</i></div>
<div class="cell" style="left:1268px;top:615px">3 <i style="top:1px">直流</i></div>
<div class="cell" style="left:1341px;top:615px">15</div>
<div class="cell" style="left:1427px;top:615px"><i style="top:1px">韩国</i></div>
<div class="cell" style="left:1474px;top:615px"><i style="top:1px">瓶</i></div>
<div class="cell" style="left:1520px;top:615px">500ml</div>
<div class="cell" style="left:1576px;top:615px">13</div>
<div class="cell" style="left:1623px;top:615px">1095</div>
<div class="cell" style="left:1755px;top:615px">2</div>
<div class="cell" style="left:1815px;top:615px">3</div>
<div class="cell" style="left:34px;top:651px"><i style="top:1px">综超</i></div>
<div class="cell" style="left:102px;top:651px">1025<i style="top:1px">金沙店</i></div>
<div class="cell" style="left:261px;top:651px">504001158</div>
<div class="cell" style="left:346px;top:651px"><i style="top:1px">爱敬科娜洗丝蜂胶红色洗发水</i>500ml</div>
<div class="cell" style="left:573px;top:651px">8801046369388</div>
<div class="cell" style="left:688px;top:651px">48.97</div>
<div class="cell" style="left:761px;top:651px">59.9</div>
<div class="cell" style="left:807px;top:651px">0</div>
<div class="cell" style="left:880px;top:651px">3</div>
<div class="cell" style="left:953px;top:651px">147.11</div>
<div class="cell" style="left:1026px;top:651px"><i style="top:1px">一般商品</i></div>
<div class="cell" style="left:1099px;top:651px"><i style="top:1px">是</i></div>
<div class="cell" style="left:1185px;top:651px">4 <i style="top:1px">暂禁下单</i></div>
<div class="cell" style="left:1268px;top:651px">3 <i style="top:1px">直流</i></div>
<div class="cell" style="left:1341px;top:651px">15</div>
<div class="cell" style="left:1427px;top:651px"><i style="top:1px">韩国</i></div>
<div class="cell" style="left:1474px;top:651px"><i style="top:1px">瓶</i></div>
<div class="cell" style="left:1520px;top:651px">500ml</div>
<div class="cell" style="left:1576px;top:651px">13</div>
<div class="cell" style="left:1623px;top:651px">1095</div>
<div class="cell" style="left:1755px;top:651px">1</div>
<div class="cell" style="left:1815px;top:651px">3</div>
<div class="cell" style="left:34px;top:687px"><i style="top:1px">小标超</i></div>
<div class="cell" style="left:102px;top:687px">1026<i style="top:1px">花果园</i>S<i style="top:1px">区店</i></div>
<div class="cell" style="left:261px;top:687px">504001158</div>
<div class="cell" style="left:346px;top:687px"><i style="top:1px">爱敬科娜洗丝蜂胶红色洗发水</i>500ml</div>
<div class="cell" style="left:573px;top:687px">8801046369388</div>
<div class="cell" style="left:688px;top:687px">48.97</div>
<div class="cell" style="left:761px;top:687px">59.9</div>
<div class="cell" style="left:807px;top:687px">0</div>
<div class="cell" style="left:880px;top:687px">4</div>
<div class="cell" style="left:953px;top:687px">195.88</div>
<div class="cell" style="left:1026px;top:687px"><i style="top:1px">一般商品</i></div>
<div class="cell" style="left:1099px;top:687px"><i style="top:1px">是</i></div>
<div class="cell" style="left:1185px;top:687px">4 <i style="top:1px">暂禁下单</i></div>
<div class="cell" style="left:1268px;top:687px">3 <i style="top:1px">直流</i></div>
<div class="cell" style="left:1341px;top:687px">15</div>
<div class="cell" style="left:1427px;top:687px"><i style="top:1px">韩国</i></div>
<div class="cell" style="left:1474px;top:687px"><i style="top:1px">瓶</i></div>
<div class="cell" style="left:1520px;top:687px">500ml</div>
<div class="cell" style="left:1576px;top:687px">13</div>
<div class="cell" style="left:1623px;top:687px">1095</div>
<div class="cell" style="left:1755px;top:687px">1</div>
<div class="cell" style="left:1815px;top:687px">3</div>
<div class="cell" style="left:34px;top:723px"><i style="top:1px">综超</i></div>
<div class="cell" style="left:102px;top:723px">1027<i style="top:1px">毕节店</i></div>
<div class="cell" style="left:261px;top:723px">504001158</div>
<div class="cell" style="left:346px;top:723px"><i style="top:1px">爱敬科娜洗丝蜂胶红色洗发水</i>500ml</div>
<div class="cell" style="left:573px;top:723px">8801046369388</div>
<div class="cell" style="left:688px;top:723px">48.97</div>
<div class="cell" style="left:761px;top:723px">59</div>
<div class="cell" style="left:807px;top:723px">0</div>
<div class="cell" style="left:880px;top:723px">5</div>
<div class="cell" style="left:953px;top:723px">244.85</div>
<div class="cell" style="left:1026px;top:723px"><i style="top:1px">一般商品</i></div>
<div class="cell" style="left:1099px;top:723px"><i style="top:1px">是</i></div>
<div class="cell" style="left:1185px;top:723px">4 <i style="top:1px">暂禁下单</i></div>
<div class="cell" style="left:1268px;top:723px">3 <i style="top:1px">直流</i></div>
<div class="cell" style="left:1341px;top:723px">15</div>
<div class="cell" style="left:1427px;top:723px"><i style="top:1px">韩国</i></div>
<div class="cell" style="left:1474px;top:723px"><i style="top:1px">瓶</i></div>
<div class="cell" style="left:1520px;top:723px">500ml</div>
<div class="cell" style="left:1576px;top:723px">13</div>
<div class="cell" style="left:1623px;top:723px">1095</div>
<div class="cell" style="left:1755px;top:723px">2</div>
<div class="cell" style="left:1815px;top:723px">3</div>
<div class="cell" style="left:34px;top:759px"><i style="top:1px">标超</i></div>
<div class="cell" style="left:102px;top:759px">1028<i style="top:1px">松桃店</i></div>
<div class="cell" style="left:261px;top:759px">504001158</div>
<div class="cell" style="left:346px;top:759px"><i style="top:1px">爱敬科娜洗丝蜂胶红色洗发水</i>500ml</div>
<div class="cell" style="left:573px;top:759px">8801046369388</div>
<div class="cell" style="left:688px;top:759px">48.97</div>
<div class="cell" style="left:761px;top:759px">59.9</div>
<div class="cell" style="left:807px;top:759px">6</div>
<div class="cell" style="left:880px;top:759px">0</div>
<div class="cell" style="left:953px;top:759px">0</div>
<div class="cell" style="left:1026px;top:759px"><i style="top:1px">一般商品</i></div>
<div class="cell" style="left:1099px;top:759px"><i style="top:1px">是</i></div>
<div class="cell" style="left:1185px;top:759px">4 <i style="top:1px">暂禁下单</i></div>
<div class="cell" style="left:1268px;top:759px">3 <i style="top:1px">直流</i></div>
<div class="cell" style="left:1341px;top:759px">15</div>
<div class="cell" style="left:1427px;top:759px"><i style="top:1px">韩国</i></div>
<div class="cell" style="left:1474px;top:759px"><i style="top:1px">瓶</i></div>
<div class="cell" style="left:1520px;top:759px">500ml</div>
<div class="cell" style="left:1576px;top:759px">13</div>
<div class="cell" style="left:1623px;top:759px">1095</div>
<div class="cell" style="left:1755px;top:759px">2</div>
<div class="cell" style="left:1815px;top:759px">3</div>
<div class="cell" style="left:34px;top:795px"><i style="top:1px">综超</i></div>
<div class="cell" style="left:102px;top:795px">1029<i style="top:1px">瓮安店</i></div>
<div class="cell" style="left:261px;top:795px">504001158</div>
<div class="cell" style="left:346px;top:795px"><i style="top:1px">爱敬科娜洗丝蜂胶红色洗发水</i>500ml</div>
<div class="cell" style="left:573px;top:795px">8801046369388</div>
<div class="cell" style="left:688px;top:795px">48.97</div>
<div class="cell" style="left:761px;top:795px">59</div>
<div class="cell" style="left:807px;top:795px">0</div>
<div class="cell" style="left:880px;top:795px">4</div>
<div class="cell" style="left:953px;top:795px">195.88</div>
<div class="cell" style="left:1026px;top:795px"><i style="top:1px">一般商品</i></div>
<div class="cell" style="left:1099px;top:795px"><i style="top:1px">是</i></div>
<div class="cell" style="left:1185px;top:795px">4 <i style="top:1px">暂禁下单</i></div>
<div class="cell" style="left:1268px;top:795px">3 <i style="top:1px">直流</i></div>
<div class="cell" style="left:1341px;top:795px">15</div>
<div class="cell" style="left:1427px;top:795px"><i style="top:1px">韩国</i></div>
<div class="cell" style="left:1474px;top:795px"><i style="top:1px">瓶</i></div>
<div class="cell" style="left:1520px;top:795px">500ml</div>
<div class="cell" style="left:1576px;top:795px">13</div>
<div class="cell" style="left:1623px;top:795px">1095</div>
<div class="cell" style="left:1755px;top:795px">2</div>
<div class="cell" style="left:1815px;top:795px">3</div>
<div class="cell" style="left:34px;top:831px"><i style="top:1px">标超</i></div>
<div class="cell" style="left:102px;top:831px">1030<i style="top:1px">修文文城逸都店</i></div>
<div class="cell" style="left:261px;top:831px">504001158</div>
<div class="cell" style="left:346px;top:831px"><i style="top:1px">爱敬科娜洗丝蜂胶红色洗发水</i>500ml</div>
<div class="cell" style="left:573px;top:831px">8801046369388</div>
<div class="cell" style="left:688px;top:831px">48.97</div>
<div class="cell" style="left:761px;top:831px">59.9</div>
<div class="cell" style="left:807px;top:831px">0</div>
<div class="cell" style="left:880px;top:831px">4</div>
<div class="cell" style="left:953px;top:831px">195.88</div>
<div class="cell" style="left:1026px;top:831px"><i style="top:1px">一般商品</i></div>
<div class="cell" style="left:1099px;top:831px"><i style="top:1px">是</i></div>
<div class="cell" style="left:1185px;top:831px">4 <i style="top:1px">暂禁下单</i></div>
<div class="cell" style="left:1268px;top:831px">3 <i style="top:1px">直流</i></div>
<div class="cell" style="left:1341px;top:831px">15</div>
<div class="cell" style="left:1427px;top:831px"><i style="top:1px">韩国</i></div>
<div class="cell" style="left:1474px;top:831px"><i style="top:1px">瓶</i></div>
<div class="cell" style="left:1520px;top:831px">500ml</div>
<div class="cell" style="left:1576px;top:831px">13</div>
<div class="cell" style="left:1623px;top:831px">1095</div>
<div class="cell" style="left:1755px;top:831px">2</div>
<div class="cell" style="left:1815px;top:831px">3</div>
<div class="cell" style="left:34px;top:867px"><i style="top:1px">标超</i></div>
<div class="cell" style="left:102px;top:867px">1031<i style="top:1px">织金店</i></div>
<div class="cell" style="left:261px;top:867px">504001158</div>
<div class="cell" style="left:346px;top:867px"><i style="top:1px">爱敬科娜洗丝蜂胶红色洗发水</i>500ml</div>
<div class="cell" style="left:573px;top:867px">8801046369388</div>
<div class="cell" style="left:688px;top:867px">48.97</div>
<div class="cell" style="left:761px;top:867px">59.9</div>
<div class="cell" style="left:807px;top:867px">4</div>
<div class="cell" style="left:880px;top:867px">5</div>
<div class="cell" style="left:953px;top:867px">244.85</div>
<div class="cell" style="left:1026px;top:867px"><i style="top:1px">一般商品</i></div>
<div class="cell" style="left:1099px;top:867px"><i style="top:1px">是</i></div>
<div class="cell" style="left:1185px;top:867px">4 <i style="top:1px">暂禁下单</i></div>
<div class="cell" style="left:1268px;top:867px">3 <i style="top:1px">直流</i></div>
<div class="cell" style="left:1341px;top:867px">15</div>
<div class="cell" style="left:1427px;top:867px"><i style="top:1px">韩国</i></div>
<div class="cell" style="left:1474px;top:867px"><i style="top:1px">瓶</i></div>
<div class="cell" style="left:1520px;top:867px">500ml</div>
<div class="cell" style="left:1576px;top:867px">13</div>
<div class="cell" style="left:1623px;top:867px">1095</div>
<div class="cell" style="left:1755px;top:867px">3</div>
<div class="cell" style="left:1815px;top:867px">3</div>
<div class="t" style="left:1396px;top:920px;font-size:13px;line-height:16px;color:#333">共有59条记录，共有<b>3</b>页</div>
<div class="t" style="left:1546px;top:920px;font-size:13px;line-height:16px;color:#333">每页</div>
<div class="a" style="left:1577px;top:915px;width:57px;height:24px;border:1px solid #dcdcdc;background:#fff"></div>
<div class="t" style="left:1592px;top:919px;font-size:14px;line-height:16px;color:#222">20</div>
<svg class="a" style="left:1620px;top:923px" width="10" height="7" viewBox="0 0 10 7"><path d="M1 1.2 L5 5.2 L9 1.2" fill="none" stroke="#111" stroke-width="2"/></svg>
<div class="t" style="left:1639px;top:920px;font-size:13px;line-height:16px;color:#333">条</div>
<div class="t" style="left:1662px;top:920px;font-size:13px;line-height:16px;color:#333">第</div>
<div class="a" style="left:1680px;top:914px;width:52px;height:26px;border:1px solid #dcdcdc;background:#fff"></div>
<div class="t" style="left:1695px;top:919px;font-size:14px;line-height:16px;color:#222">1</div>
<div class="t" style="left:1737px;top:920px;font-size:13px;line-height:16px;color:#333">页</div>
<div class="a" style="left:1761px;top:915px;width:48px;height:24px;border:1px solid #dcdcdc;background:#fff"></div>
<div class="t" style="left:1772px;top:920px;font-size:13px;line-height:16px;color:#333">跳转</div>
<div class="a" style="left:1829px;top:915px;width:61px;height:24px;border:1px solid #0b76da;background:#fff"></div>
<div class="t" style="left:1840px;top:920px;font-size:13px;line-height:16px;color:#0b76da">下一页</div>
<div class="a" style="left:1904px;top:91px;width:8px;height:10px;background:#909297"></div>
<div class="a" style="left:1887px;top:28.5px;width:29px;height:29px;border-radius:50%;background:#fff"></div>
<div class="a" style="left:1890px;top:31.5px;width:23px;height:23px;border-radius:50%;background:#777"></div>
<svg class="a" style="left:1890px;top:31.5px" width="23" height="23" viewBox="0 0 23 23"><path d="M6.8 6.2 L17 16.2 M17 6.2 L6.8 16.2" stroke="#fff" stroke-width="1.9"/></svg>
</div>
<div class="a" style="left:1912px;top:1px;width:4px;height:960px;background:#f4f4f4"></div>
<div class="a" style="left:0;top:961px;width:1916px;height:40px;background:#dedede"></div>
<svg class="a" style="left:12px;top:973px" width="16" height="16" viewBox="0 0 18 17" preserveAspectRatio="none"><path d="M0 2.3 L7.3 1.3 L7.3 8 L0 8 Z M8.3 1.1 L17.5 0 L17.5 8 L8.3 8 Z M0 9 L7.3 9 L7.3 15.7 L0 14.7 Z M8.3 9 L17.5 9 L17.5 17 L8.3 15.9 Z" fill="#000"/></svg>
<div class="a" style="left:44px;top:961px;width:344px;height:40px;background:#fff;border-left:1px solid #c8c8c8;border-right:1px solid #c8c8c8"></div>
<svg class="a" style="left:55px;top:972px" width="18" height="18" viewBox="0 0 18 18"><circle cx="11" cy="7" r="5.5" fill="none" stroke="#111" stroke-width="1.4"/><path d="M7 11 L1 17" stroke="#111" stroke-width="1.5"/></svg>
<div class="t" style="left:84px;top:973px;font-size:14px;line-height:18px;color:#222">搜索</div>
<svg class="a" style="left:398px;top:962px" width="340" height="39" viewBox="398 962 340 39">
<defs>
<linearGradient id="fo" x1="0" y1="0" x2="0" y2="1"><stop offset="0" stop-color="#fcdc72"/><stop offset="1" stop-color="#f4c54a"/></linearGradient>
<linearGradient id="fb" x1="0" y1="0" x2="0" y2="1"><stop offset="0" stop-color="#4ea3ee"/><stop offset="1" stop-color="#2b7bd3"/></linearGradient>
<linearGradient id="sb" x1="0" y1="0" x2="1" y2="1"><stop offset="0" stop-color="#1d62b0"/><stop offset="1" stop-color="#1a3a6e"/></linearGradient>
<linearGradient id="lb" x1="0" y1="0" x2="0" y2="1"><stop offset="0" stop-color="#1b95ea"/><stop offset="1" stop-color="#0a5fcf"/></linearGradient>
<linearGradient id="eg" x1="0" y1="0" x2="1" y2="0.6"><stop offset="0" stop-color="#39c6f4"/><stop offset="0.55" stop-color="#2ec0c6"/><stop offset="1" stop-color="#5bdc4f"/></linearGradient>
<linearGradient id="el" x1="0" y1="0" x2="0" y2="1"><stop offset="0" stop-color="#1a9be6"/><stop offset="1" stop-color="#0b6fd0"/></linearGradient>
<linearGradient id="wp" gradientUnits="userSpaceOnUse" x1="0" y1="974" x2="0" y2="990"><stop offset="0" stop-color="#f41f1f"/><stop offset="1" stop-color="#ff5408"/></linearGradient>
<linearGradient id="wc" x1="0" y1="0" x2="0" y2="1"><stop offset="0" stop-color="#08db6c"/><stop offset="1" stop-color="#05bf58"/></linearGradient>
</defs>
<path d="M404 972.2 L412.6 972.2 L414 973.6 L425.2 973.6 L425.2 989.6 L404 989.6 Z" fill="url(#fo)"/>
<path d="M404 972.2 L412.6 972.2 L414.2 973.8 L413 975.2 L404 975.2 Z" fill="#d9a21b"/>
<path d="M408 989.9 L408 983.2 Q408 982 409.2 982 L420.6 982 Q421.8 982 421.8 983.2 L421.8 989.9 L418 989.9 L418 985.4 L412.1 985.4 L412.1 989.9 Z" fill="url(#fb)"/>
<path d="M457.5 975 L457.5 971.2 Q457.5 970.3 458.4 970.3 L469.1 970.3 Q470 970.3 470 971.2 L470 975" fill="none" stroke="#2ab5f5" stroke-width="1.6"/>
<path d="M452 974 L475 974 L475 989.5 Q475 992.7 471.8 992.7 L455.2 992.7 Q452 992.7 452 989.5 Z" fill="url(#sb)"/>
<rect x="459" y="979" width="4.1" height="4.1" fill="#f2521f"/><rect x="464.1" y="979" width="4.1" height="4.1" fill="#7fbb03"/>
<rect x="459" y="984.1" width="4.1" height="4.1" fill="#04a5f0"/><rect x="464.1" y="984.1" width="4.1" height="4.1" fill="#ffb902"/>
<circle cx="513" cy="980.8" r="11" fill="url(#lb)"/>
<path d="M510.3 973.2 L517.8 981.8 L514.2 982.5 L515.6 988.5 L507.8 979.8 L511.4 978.9 Z" fill="#fff"/>
<rect x="538" y="961" width="45" height="40" fill="#f1f1f1"/>
<rect x="582" y="962" width="1" height="39" fill="#c6c6c6"/>
<g transform="translate(550 969)">
<circle cx="12" cy="12" r="12" fill="url(#eg)"/>
<path d="M11.6 13.3 C13.5 16.6 19 17.3 24.6 14 L24.6 25 L11 25 Z" fill="#f1f1f1"/>
<path d="M0 12 C0 7.5 3.8 5.5 7.8 5.5 C11 5.5 13.6 7.2 14.2 9.4 C12.4 8.6 9 8.9 8.1 12 C7.4 15.5 8.6 20.8 13 24.1 C5.6 24 0 19 0 12 Z" fill="url(#el)"/>
<path d="M8.1 12 C9 8.9 12.4 8.6 14.2 9.4 C11.2 10 10.6 13.6 12.1 15.6 C14.1 18.3 18.6 19.3 23.3 17.9 C21.6 21.6 17.5 24.2 13 24.1 C8.6 20.8 7.4 15.5 8.1 12 Z" fill="#0e4d98"/>
<ellipse cx="12.6" cy="12.6" rx="2.6" ry="2.9" fill="#f1f1f1"/>
</g>
<rect x="599" y="969" width="23.8" height="24" rx="4.5" fill="#2a88ea"/>
<circle cx="610.3" cy="975.4" r="2.4" fill="#fff"/><circle cx="606" cy="979.9" r="1.8" fill="#fff"/>
<circle cx="610.3" cy="984" r="2" fill="#fff"/><circle cx="614.8" cy="988.7" r="1.2" fill="#fff"/>
<g fill="none" stroke="url(#wp)" stroke-width="3.3" stroke-linejoin="round" stroke-linecap="round">
<path d="M649.6 975.5 L657.6 975.5"/>
<path d="M649.6 975.5 L656.3 988.6 L664.4 975.5"/>
<path d="M664.4 975.5 L670.8 975.5 L663.7 988.6 L661.6 982.3"/>
</g>
<rect x="696.8" y="968.8" width="24.2" height="24.2" rx="5.5" fill="url(#wc)"/>
<ellipse cx="706.2" cy="979.4" rx="5.6" ry="5.1" fill="#fff"/>
<path d="M702.5 983.5 L701.5 986 L705 984.4 Z" fill="#fff"/>
<ellipse cx="712.3" cy="983.1" rx="4.9" ry="4.4" fill="#fff" stroke="#0bcf62" stroke-width="0.9"/>
<path d="M715 986.6 L716.5 988.5 L713 987.2 Z" fill="#fff"/>
<circle cx="704.3" cy="977.6" r="0.85" fill="#0bc85f"/><circle cx="708.3" cy="977.6" r="0.85" fill="#0bc85f"/>
<circle cx="710.7" cy="981.8" r="0.75" fill="#0bc85f"/><circle cx="714.2" cy="981.8" r="0.75" fill="#0bc85f"/>
</svg>
<div class="a" style="left:538px;top:999px;width:46px;height:2px;background:#1a6fce"></div>
<div class="a" style="left:591px;top:999px;width:40px;height:2px;background:#1a6fce"></div>
<div class="a" style="left:640px;top:999px;width:40px;height:2px;background:#1a6fce"></div>
<div class="a" style="left:689px;top:999px;width:40px;height:2px;background:#1a6fce"></div>
<div class="a" style="left:672px;top:999px;width:8px;height:2px;background:#6ea5e3"></div>
<svg class="a" style="left:1701px;top:977px" width="14" height="8" viewBox="0 0 14 8"><path d="M1 7.3 L7 1.3 L13 7.3" fill="none" stroke="#111" stroke-width="1.4"/></svg>
<svg class="a" style="left:1723px;top:974px" width="16" height="13" viewBox="0 0 16 13"><path d="M1 4.5 L3.5 4.5 L7 1 L7 12 L3.5 8.5 L1 8.5 Z" fill="none" stroke="#111" stroke-width="1.2"/><path d="M10 4.5 L14.5 9 M14.5 4.5 L10 9" stroke="#111" stroke-width="1.2"/></svg>
<svg class="a" style="left:1748px;top:973px" width="17" height="16" viewBox="0 0 17 16"><rect x="0" y="0" width="17" height="16" rx="3" fill="#1ec85a"/><ellipse cx="7" cy="6.5" rx="5" ry="4" fill="#fff"/><ellipse cx="10.5" cy="9.5" rx="4.3" ry="3.5" fill="#fff" stroke="#1ec85a" stroke-width="0.8"/></svg>
<div class="t" style="left:1772px;top:973px;font-size:14px;line-height:18px;color:#000;font-weight:bold">中</div>
<div class="a" style="left:1790px;top:961px;width:73px;height:40px;background:#e6e6e6"></div>
<div class="t" style="left:1811px;top:964px;font-size:13px;line-height:16px;color:#111">11:49</div>
<div class="t" style="left:1797px;top:983px;font-size:13px;line-height:16px;color:#111">2026/3/10</div>
<svg class="a" style="left:1874px;top:972px" width="26" height="26" viewBox="0 0 26 26"><path d="M1 1 L17 1 L17 13 L6 13 L3 16 L3 13 L1 13 Z" fill="#000"/><path d="M4 4.5 L14 4.5 M4 7.5 L14 7.5 M4 10.5 L10 10.5" stroke="#fff" stroke-width="1.2"/><circle cx="16.5" cy="16.5" r="7" fill="#d8d8d8" stroke="#888" stroke-width="1"/><text x="16.5" y="20.5" font-size="11" font-weight="bold" text-anchor="middle" font-family="Liberation Sans" fill="#000">2</text></svg>
<div class="a" style="left:1911px;top:961px;width:1px;height:40px;background:#bdbdbd"></div>
<div class="a" style="left:1777px;top:922px;width:98px;height:38px;background:#fff;border:1px solid #777;box-shadow:2px 2px 3px rgba(0,0,0,0.35)"></div>
<div class="t" style="left:1783px;top:925px;font-size:12px;line-height:17px;color:#555">2026年3月10日<br>星期二</div>
</body></html>
